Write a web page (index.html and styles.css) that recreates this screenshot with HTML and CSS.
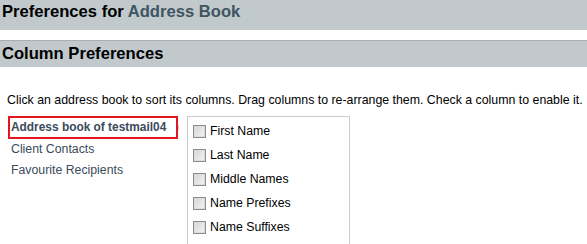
FILE: index.html
```html
<!DOCTYPE html>
<html lang="en">
<head>
    <meta charset="UTF-8">
    <title>Preferences for Address Book</title>
    <link rel="stylesheet" href="styles.css">
</head>
<body>
    <h1 class="page-title">Preferences for <span class="book-name">Address Book</span></h1>

    <h2 class="section-title">Column Preferences</h2>

    <p class="hint">Click an address book to sort its columns. Drag columns to re-arrange them. Check a column to enable it.</p>

    <div class="prefs">
        <ul class="books">
            <li class="book selected">Address book of testmail04</li>
            <li class="book">Client Contacts</li>
            <li class="book">Favourite Recipients</li>
        </ul>

        <ul class="columns">
            <li><label><input type="checkbox"> First Name</label></li>
            <li><label><input type="checkbox"> Last Name</label></li>
            <li><label><input type="checkbox"> Middle Names</label></li>
            <li><label><input type="checkbox"> Name Prefixes</label></li>
            <li><label><input type="checkbox"> Name Suffixes</label></li>
        </ul>
    </div>
</body>
</html>
```

FILE: styles.css
```css
body {
    font-family: "Liberation Sans", Arial, sans-serif;
    margin: 0;
    padding: 0;
    background-color: white;
    color: #000;
    overflow: hidden;
}
.page-title {
    margin: 0;
    height: 30px;
    padding: 0 0 0 2px;
    line-height: 24px;
    font-size: 16.6px;
    background-color: #c1c9cc;
}
.book-name {
    color: #3e5561;
}
.section-title {
    margin: 10px 0 0 0;
    height: 25px;
    padding: 1px 0 0 2px;
    line-height: 24px;
    font-size: 16.6px;
    background-color: #c1c9cc;
    border-top: 1px solid #a7afb2;
}
.hint {
    margin: 0;
    padding: 25px 0 0 7px;
    font-size: 12.35px;
    line-height: 16px;
    white-space: nowrap;
}
.prefs {
    display: flex;
    margin-top: 8px;
    padding-left: 8px;
}
.books {
    list-style: none;
    margin: 0;
    padding: 0;
    width: 179px;
    font-size: 12.3px;
    color: #3b4b5b;
    white-space: nowrap;
}
.book {
    padding: 0 0 0 3px;
    height: 21px;
    line-height: 21px;
}
.book.selected {
    font-weight: bold;
    font-size: 11.9px;
    height: 19px;
    line-height: 19px;
    padding-left: 1px;
    border: 2px solid #e3161e;
    width: 165px;
    box-shadow: 10px 0 0 -9px #d0d0d0;
}
.columns {
    list-style: none;
    margin: 0;
    padding: 2px 0 0 5px;
    width: 156px;
    border: 1px solid #cdcdcd;
    border-bottom: none;
    font-size: 12.3px;
    height: 140px;
    white-space: nowrap;
}
.columns li {
    height: 24px;
}
.columns label {
    display: flex;
    align-items: center;
    height: 24px;
    gap: 4px;
}
.columns input {
    appearance: none;
    margin: 0;
    width: 13px;
    height: 13px;
    border: 1px solid #8c8c8c;
    background: linear-gradient(135deg, #d6d6d6, #f4f4f4);
    box-shadow: inset 0 0 0 1px #dcdcdc;
}
```
